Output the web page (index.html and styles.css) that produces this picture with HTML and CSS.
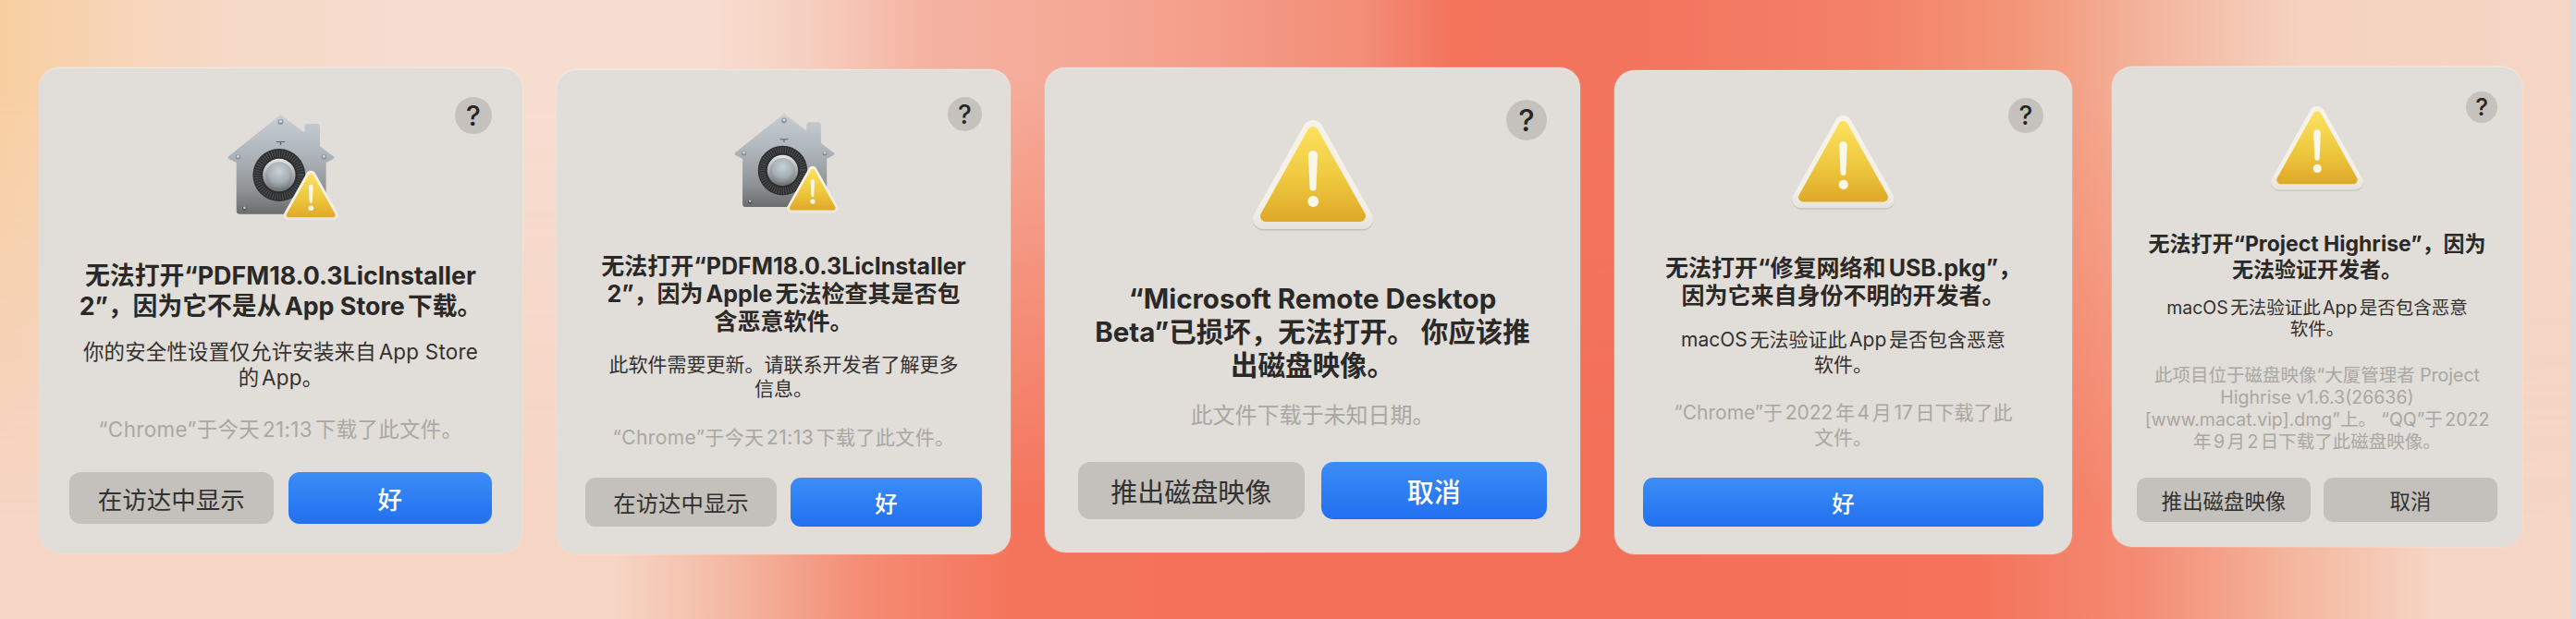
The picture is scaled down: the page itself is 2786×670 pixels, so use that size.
FILE: index.html
```html
<!DOCTYPE html>
<html lang="zh-CN">
<head>
<meta charset="utf-8">
<title>macOS 安全提示</title>
<link rel="stylesheet" href="styles.css">
</head>
<body>
<svg class="defs" aria-hidden="true">
  <defs>
    <linearGradient id="tri" gradientUnits="userSpaceOnUse" x1="0" y1="7" x2="0" y2="110">
      <stop offset="0" stop-color="#fde25f"/><stop offset=".55" stop-color="#eec83f"/><stop offset="1" stop-color="#dfa828"/>
    </linearGradient>
    <linearGradient id="rim" gradientUnits="userSpaceOnUse" x1="0" y1="0" x2="0" y2="118">
      <stop offset="0" stop-color="#f7f3e8"/><stop offset=".8" stop-color="#f3f0e8"/><stop offset="1" stop-color="#e6e3dc"/>
    </linearGradient>
    <linearGradient id="metal" gradientUnits="userSpaceOnUse" x1="0" y1="48" x2="0" y2="362">
      <stop offset="0" stop-color="#c6ced3"/><stop offset=".4" stop-color="#adb4b9"/><stop offset=".75" stop-color="#909396"/><stop offset="1" stop-color="#6b6c6e"/>
    </linearGradient>
    <linearGradient id="knobRing" x1="0" y1="0" x2="0" y2="1">
      <stop offset="0" stop-color="#e6eaec"/><stop offset="1" stop-color="#6d7073"/>
    </linearGradient>
    <radialGradient id="knob" cx=".5" cy=".35" r=".7">
      <stop offset="0" stop-color="#c8d1d6"/><stop offset=".6" stop-color="#a5aeb3"/><stop offset="1" stop-color="#767a7d"/>
    </radialGradient>
    <symbol id="warn" viewBox="0 0 130 120">
      <path d="M65 12.500 11 108.500H119Z" fill="#000" fill-opacity=".13" stroke="#000" stroke-opacity=".13" stroke-width="22" stroke-linejoin="round"/>
      <path d="M65 11 11 107H119Z" fill="url(#rim)" stroke="url(#rim)" stroke-width="22" stroke-linejoin="round"/>
      <path d="M65 13 14 104H116Z" fill="url(#tri)" stroke="url(#tri)" stroke-width="12" stroke-linejoin="round"/>
      <path d="M60 38a5 5 0 0 1 10 0L68.500 73a3.500 3.500 0 0 1-7 0Z" fill="#f9f6ea"/>
      <circle cx="65.300" cy="88" r="6" fill="#f9f6ea"/>
    </symbol>
    <symbol id="keeper" viewBox="60 35 380 350">
      <path d="M250 48 332 110V82Q332 76 338 76H366Q372 76 372 82V146L418 180 392 194V352Q392 358 386 358H118Q112 358 112 352V194L85 180Z" fill="url(#metal)" stroke="url(#metal)" stroke-width="10" stroke-linejoin="round"/>
      <circle cx="250" cy="65" r="9" fill="#8b9297"/><circle cx="250" cy="63" r="5" fill="#d3d8db"/>
      <circle cx="112" cy="178" r="8" fill="#858c91"/><circle cx="112" cy="176" r="4.500" fill="#d3d8db"/>
      <circle cx="390" cy="178" r="8" fill="#858c91"/><circle cx="390" cy="176" r="4.500" fill="#d3d8db"/>
      <circle cx="133" cy="345" r="7" fill="#4e4f51"/><circle cx="133" cy="343" r="4" fill="#c9cbcc"/>
      <path d="M236 128h28v3h-12v9h-4v-9h-12Z" fill="#5f6366"/>
      <circle cx="245" cy="237" r="85" fill="#2d2e30"/>
      <circle cx="245" cy="237" r="70" fill="none" stroke="#515254" stroke-width="22" stroke-dasharray="3 5"/>
      <circle cx="245" cy="237" r="53" fill="url(#knobRing)"/>
      <circle cx="245" cy="237" r="43" fill="url(#knob)"/>
      <use href="#warn" x="258" y="222" width="180" height="166"/>
    </symbol>
  </defs>
</svg>
<main class="stage">
  <section class="dialog d1">
    <span class="help">?</span>
    <svg class="icon"><use href="#keeper"/></svg>
    <h2 class="title">无法打开“PDFM18.0.3LicInstaller<br>2”，因为它不是从App Store下载。</h2>
    <p class="body">你的安全性设置仅允许安装来自App Store<br>的App。</p>
    <p class="meta">“Chrome”于今天21:13下载了此文件。</p>
    <div class="buttons"><span class="btn">在访达中显示</span><span class="btn primary">好</span></div>
  </section>
  <section class="dialog d2">
    <span class="help">?</span>
    <svg class="icon"><use href="#keeper"/></svg>
    <h2 class="title">无法打开“PDFM18.0.3LicInstaller<br>2”，因为Apple无法检查其是否包<br>含恶意软件。</h2>
    <p class="body">此软件需要更新。请联系开发者了解更多<br>信息。</p>
    <p class="meta">“Chrome”于今天21:13下载了此文件。</p>
    <div class="buttons"><span class="btn">在访达中显示</span><span class="btn primary">好</span></div>
  </section>
  <section class="dialog d3">
    <span class="help">?</span>
    <svg class="icon"><use href="#warn"/></svg>
    <h2 class="title">“Microsoft Remote Desktop<br>Beta”已损坏，无法打开。 你应该推<br>出磁盘映像。</h2>
    <p class="meta">此文件下载于未知日期。</p>
    <div class="buttons"><span class="btn">推出磁盘映像</span><span class="btn primary">取消</span></div>
  </section>
  <section class="dialog d4">
    <span class="help">?</span>
    <svg class="icon"><use href="#warn"/></svg>
    <h2 class="title">无法打开“修复网络和USB.pkg”，<br>因为它来自身份不明的开发者。</h2>
    <p class="body">macOS无法验证此App是否包含恶意<br>软件。</p>
    <p class="meta">“Chrome”于2022年4月17日下载了此<br>文件。</p>
    <div class="buttons"><span class="btn primary">好</span></div>
  </section>
  <section class="dialog d5">
    <span class="help">?</span>
    <svg class="icon"><use href="#warn"/></svg>
    <h2 class="title">无法打开“Project Highrise”，因为<br>无法验证开发者。</h2>
    <p class="body">macOS无法验证此App是否包含恶意<br>软件。</p>
    <p class="meta">此项目位于磁盘映像“大厦管理者 Project<br>Highrise v1.6.3(26636)<br>[www.macat.vip].dmg”上。 “QQ”于2022<br>年9月2日下载了此磁盘映像。</p>
    <div class="buttons"><span class="btn">推出磁盘映像</span><span class="btn">取消</span></div>
  </section>
</main>
<aside class="edge"></aside>
</body>
</html>
```

FILE: styles.css
```css
* { box-sizing: border-box; }
html, body { height: 100%; }
body {
  margin: 0;
  display: flex;
  overflow: hidden;
  font-family: Inter, "Noto Sans CJK SC", sans-serif;
  background: #f6d5c5;
}
.defs { position: absolute; width: 0; height: 0; }

.stage {
  position: relative;
  flex: 1;
  display: flex;
  align-items: flex-start;
  gap: 37px;
  padding-left: 42px;
  background: linear-gradient(90deg,
    #f6d5c5 0, #f6d5c5 665px, #f5c7b3 730px, #f4b8a2 790px, #f48d74 930px, #f4745b 1100px,
    #f36f58 1600px, #f4735a 2132px, #f48a72 2310px, #f5b8a0 2488px, #f5d5c4 2630px, #f5d5c4 100%);
  isolation: isolate;
}
.stage::before {
  content: "";
  position: absolute;
  inset: 0;
  z-index: -1;
  background: linear-gradient(90deg,
    #f8cfa0 0, #f7d5b8 130px, #f6dac8 260px, #f7ddd0 450px, #f7ddd0 770px, #f6d0c0 870px, #f5b3a2 1000px,
    #f4a490 1240px, #f38d77 1475px, #f4745c 1570px, #f3755e 1777px, #f38067 2008px, #f39679 2186px,
    #f3b29a 2310px, #f5d3c0 2488px, #f5d5c4 100%);
  -webkit-mask-image: linear-gradient(180deg, #000 0, #000 90px, transparent 560px);
  mask-image: linear-gradient(180deg, #000 0, #000 90px, transparent 560px);
}

.edge { width: 6px; flex: none; background: #dbdcde; }

.dialog {
  position: relative;
  flex: none;
  display: flex;
  flex-direction: column;
  align-items: center;
  text-align: center;
  background: #e1ddd8;
  border-radius: 22px;
  box-shadow: inset 0 1px 0 rgba(255, 255, 255, .35), 0 0 0 1px rgba(255, 255, 255, .12);
  color: #2b2927;
  text-autospace: normal;
}
.title, .body, .meta { margin: 0; white-space: nowrap; }
.title { font-weight: 700; }
.body { font-weight: 400; color: #33312f; }
.meta { font-weight: 400; color: #a9a7a3; }
.icon { display: block; flex: none; }
.help {
  position: absolute;
  display: flex;
  align-items: center;
  justify-content: center;
  border-radius: 50%;
  background: #c5c2bd;
  font-weight: 500;
  color: #262524;
}
.buttons { margin-top: auto; align-self: stretch; display: flex; }
.btn {
  flex: 1;
  display: flex;
  align-items: center;
  justify-content: center;
  background: #c4c1bc;
  color: #33312f;
}
.btn.primary {
  background: linear-gradient(180deg, #3c8df6, #2270f1);
  color: #fff;
  font-weight: 500;
}

.d1 { width: 523px; height: 526px; margin-top: 73px; padding: 49px 33px 32px; }
.d1 .help { top: 32px; right: 33px; width: 40px; height: 40px; font-size: 30px; }
.d1 .icon { width: 127px; height: 117px; }
.d1 .title { margin-top: 43px; font-size: 26.800px; line-height: 33px; }
.d1 .body { margin-top: 18.500px; font-size: 22.400px; line-height: 28.700px; letter-spacing: .25px; }
.d1 .meta { margin-top: 27px; font-size: 22.400px; line-height: 28.700px; letter-spacing: .4px; }
.d1 .buttons { gap: 16px; }
.d1 .btn { height: 56px; border-radius: 12px; font-size: 26.500px; }

.d2 { width: 491px; height: 525px; margin-top: 75px; padding: 46px 31px 30px; }
.d2 .help { top: 30px; right: 31px; width: 37px; height: 37px; font-size: 28px; }
.d2 .icon { width: 120px; height: 110px; }
.d2 .title { margin-top: 42px; font-size: 25px; line-height: 30px; }
.d2 .body { margin-top: 18.500px; font-size: 21px; line-height: 26.800px; }
.d2 .meta { margin-top: 25.500px; font-size: 21px; line-height: 26.800px; letter-spacing: .4px; }
.d2 .buttons { gap: 15px; }
.d2 .btn { height: 53px; border-radius: 11px; font-size: 24.400px; }

.d3 { width: 579px; height: 525px; margin-top: 73px; padding: 57px 36px 36px; }
.d3 .help { top: 35px; right: 36px; width: 44px; height: 44px; font-size: 33px; }
.d3 .icon { width: 130px; height: 120px; }
.d3 .title { margin-top: 55px; font-size: 29.500px; line-height: 36px; }
.d3 .meta { margin-top: 21.500px; font-size: 24px; line-height: 30px; }
.d3 .buttons { gap: 18px; }
.d3 .btn { height: 62px; border-radius: 13px; font-size: 29px; }

.d4 { width: 495px; height: 524px; margin-top: 76px; padding: 49px 31px 30px; }
.d4 .help { top: 30px; right: 31px; width: 38px; height: 38px; font-size: 28px; }
.d4 .icon { width: 111px; height: 102px; }
.d4 .title { margin-top: 48px; font-size: 25px; line-height: 30px; }
.d4 .body { margin-top: 18.500px; font-size: 21px; line-height: 27px; }
.d4 .meta { margin-top: 25px; font-size: 21px; line-height: 27.500px; }
.d4 .btn { height: 53px; border-radius: 11px; font-size: 24.400px; }

.d5 { width: 444px; height: 520px; margin-top: 72px; margin-left: 6px; padding: 43px 27px 27px; }
.d5 .help { top: 26.500px; right: 27px; width: 34px; height: 34px; font-size: 26px; }
.d5 .icon { width: 100px; height: 92px; }
.d5 .title { margin-top: 43px; font-size: 23px; line-height: 28px; }
.d5 .body { margin-top: 15.800px; font-size: 19.500px; line-height: 23.500px; }
.d5 .meta { margin-top: 24.800px; font-size: 19.500px; line-height: 24px; }
.d5 .buttons { gap: 14px; }
.d5 .btn { height: 48px; border-radius: 10px; font-size: 22.400px; }
```
